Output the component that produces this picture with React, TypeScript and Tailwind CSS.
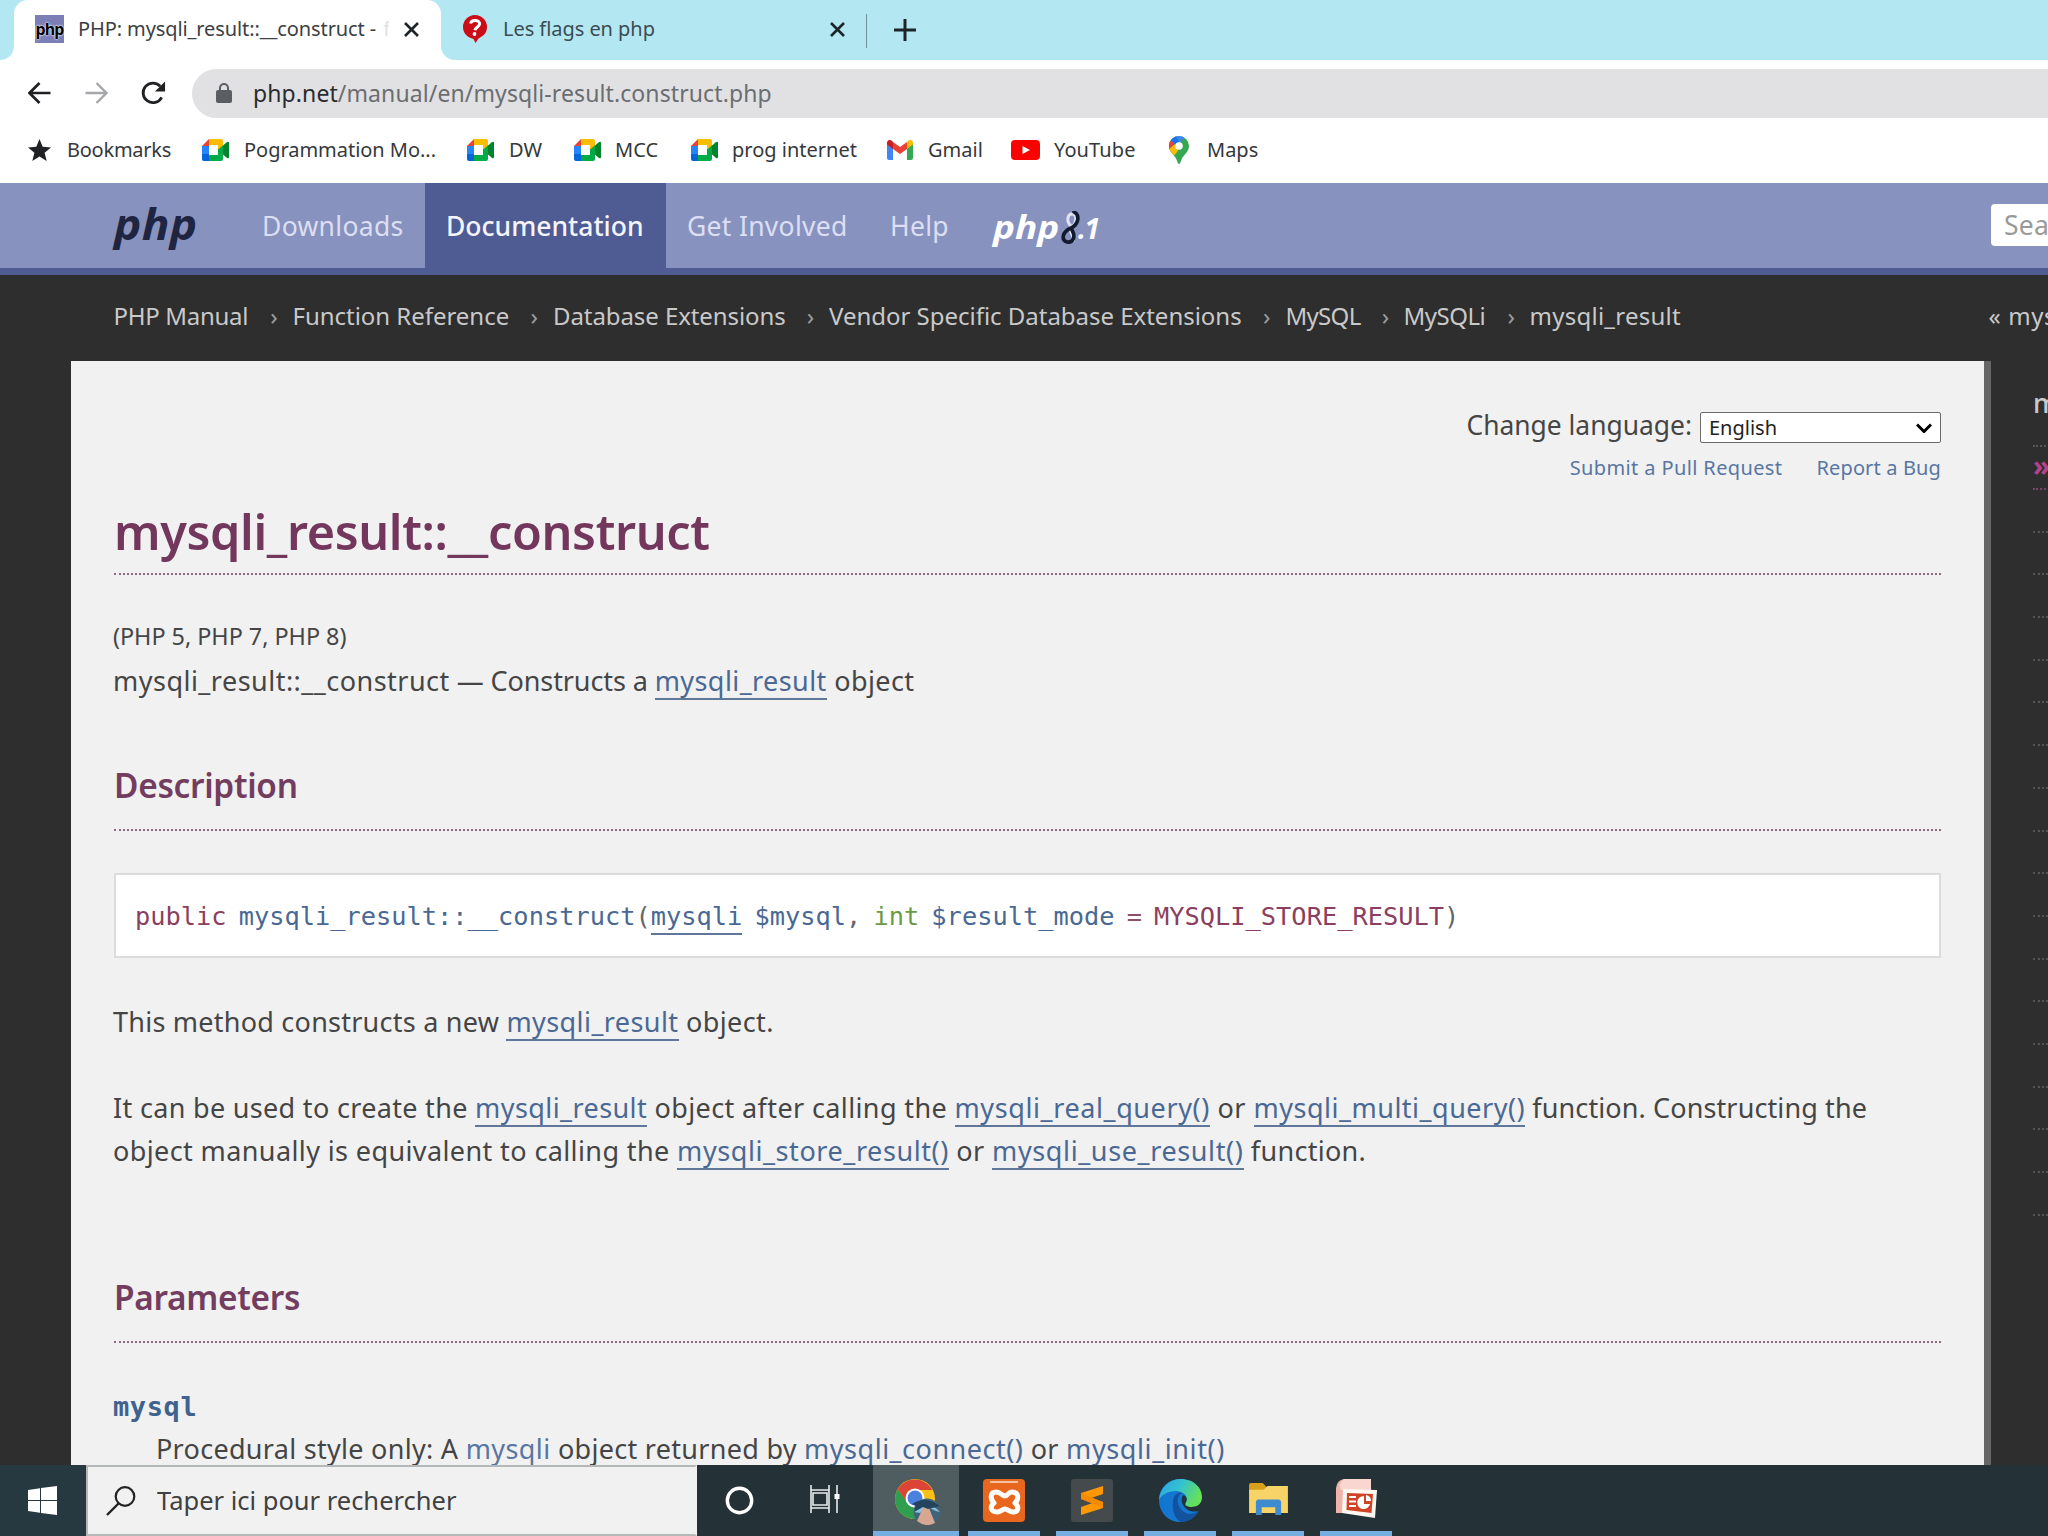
import React from "react";

const MeetIcon = () => (
  <svg className="h-[22px] w-[27px] shrink-0" viewBox="0 0 27 22">
    <path d="M7 0v7H0z" fill="#ea4335" />
    <path d="M7 0h12a2 2 0 0 1 2 2v8l-5 2V6H7z" fill="#fbbc04" />
    <path d="M0 7h7v8H0z" fill="#2684fc" />
    <path d="M0 15h7v7H2a2 2 0 0 1-2-2z" fill="#0066da" />
    <path d="M7 16h9l-1-5 6-2v11a2 2 0 0 1-2 2H7z" fill="#00ac47" />
    <path d="M16 11l9-8q2-1 2 1v14q0 2-2 1z" fill="#00832d" />
    <path d="M16 11l5-4.500v9z" fill="#00ac47" />
    <path d="M7 6h9v10H7z" fill="#fff" />
  </svg>
);

const GmailIcon = () => (
  <svg className="h-[20px] w-[26px] shrink-0" viewBox="0 0 26 20">
    <path d="M0 3v15a2 2 0 0 0 2 2h4V8z" fill="#4285f4" />
    <path d="M26 3v15a2 2 0 0 1-2 2h-4V8z" fill="#34a853" />
    <path d="M20 2v7l6-4.500V3c0-3-3-4-5-2z" fill="#fbbc04" />
    <path d="M6 2v7l7 5 7-5V2l-7 5z" fill="#ea4335" />
    <path d="M6 2v7L0 4.500V3c0-3 3-4 5-2z" fill="#c5221f" />
  </svg>
);

const YouTubeIcon = () => (
  <svg className="h-[20px] w-[29px] shrink-0" viewBox="0 0 29 20">
    <rect width="29" height="20" rx="4" fill="#f00" />
    <path d="M11.500 6v8l7.500-4z" fill="#fff" />
  </svg>
);

const MapsIcon = () => (
  <svg className="h-[28px] w-[20px] shrink-0" viewBox="0 0 20 28">
    <defs>
      <clipPath id="pin">
        <path d="M10 0a10 10 0 0 1 10 10c0 6-5 8-7.500 13.500C11.500 26 11 28 10 28s-1.500-2-2.500-4.500C5 18 0 16 0 10A10 10 0 0 1 10 0z" />
      </clipPath>
    </defs>
    <g clipPath="url(#pin)">
      <rect width="20" height="28" fill="#34a853" />
      <path d="M0 17L20-3H7L0 5z" fill="#4285f4" />
      <path d="M0 0h7l3 6-7 9-3-2z" fill="#1a73e8" />
      <path d="M0 3l5 4-3 7-3-2z" fill="#ea4335" />
      <path d="M0 13l6-5 3 7-6 7-3-3z" fill="#fbbc04" />
    </g>
    <circle cx="10" cy="10" r="3.800" fill="#fff" />
  </svg>
);

const CloseIcon = () => (
  <svg className="h-[15px] w-[15px] shrink-0" viewBox="0 0 15 15">
    <path d="M1 1l13 13M14 1L1 14" stroke="#1d2528" strokeWidth="2.600" />
  </svg>
);

function TabStrip() {
  return (
    <div className="flex h-[60px] bg-[#b3e8f3]">
      <div className="flex w-[14px] bg-white">
        <div className="h-full w-full rounded-br-[14px] bg-[#b3e8f3]" />
      </div>
      <div className="flex w-[427px] items-center rounded-t-[14px] bg-white pb-[2px] pl-[21px]">
        <div className="flex h-[28px] w-[29px] items-center justify-center bg-[#7b7fb5] text-[16px] font-bold leading-none tracking-[-0.8px] text-black [text-shadow:0_0_2px_#fff,0_0_2px_#fff]">
          php
        </div>
        <div className="ml-[14px] flex w-[311px] overflow-hidden whitespace-nowrap text-[20px] tracking-[-0.1px] text-[#3c4043]">
          <span>PHP: mysqli_result::__construct -</span>
          <span className="ml-[7px] opacity-15">f</span>
        </div>
        <div className="ml-[15px]">
          <CloseIcon />
        </div>
      </div>
      <div className="flex w-[425px] bg-white">
        <div className="flex h-full w-full items-center rounded-bl-[14px] bg-[#b3e8f3] pb-[2px] pl-[22px]">
          <svg className="h-[28px] w-[24px] shrink-0" viewBox="0 0 24 28">
            <path d="M12 0a12 12 0 0 1 12 12c0 7-5 9.500-8.500 11.500L12.500 28l-2-4C5 22.500 0 19 0 12A12 12 0 0 1 12 0z" fill="#cb0d17" />
            <path d="M7.500 8.500c1-4.500 10-4 9 .8-.5 2.700-4 2.700-4.500 6" stroke="#fff" strokeWidth="3" fill="none" />
            <circle cx="11.500" cy="19" r="1.900" fill="#fff" />
          </svg>
          <span className="ml-[16px] w-[327px] text-[20px] tracking-[-0.05px] text-[#3b4c52]">Les flags en php</span>
          <CloseIcon />
        </div>
      </div>
      <div className="mt-[14px] h-[34px] w-px bg-[#6f8f97]" />
      <svg className="ml-[27px] mt-[19px] h-[22px] w-[22px]" viewBox="0 0 22 22">
        <path d="M11 0v22M0 11h22" stroke="#1d2528" strokeWidth="3" />
      </svg>
    </div>
  );
}

function Toolbar() {
  return (
    <div className="flex h-[66px] items-center bg-white pl-[28px]">
      <svg className="h-[22px] w-[23px]" viewBox="0 0 23 22">
        <path d="M22.500 11H2M11.500 1L1.500 11l10 10" stroke="#202124" strokeWidth="2.700" fill="none" />
      </svg>
      <svg className="ml-[34px] h-[22px] w-[23px]" viewBox="0 0 23 22">
        <path d="M.5 11H21M11.500 1l10 10-10 10" stroke="#a5a7aa" strokeWidth="2.400" fill="none" />
      </svg>
      <svg className="ml-[33px] h-[24px] w-[25px]" viewBox="0 0 26 24">
        <path d="M21.500 16.500A10.200 10.200 0 1 1 20 5" stroke="#202124" strokeWidth="2.900" fill="none" />
        <path d="M25 0v10.500H14.500z" fill="#202124" />
      </svg>
      <div className="ml-[26px] flex h-[49px] flex-1 items-center rounded-l-full bg-[#e1e1e4] pl-[24px]">
        <svg className="h-[20px] w-[16px]" viewBox="0 0 16 20">
          <rect y="7" width="16" height="13" rx="2" fill="#5a5d62" />
          <path d="M4 8V5a4 4 0 0 1 8 0v3" stroke="#5a5d62" strokeWidth="2" fill="none" />
        </svg>
        <span className="ml-[21px] text-[23px] tracking-[0.1px] text-[#6b6d70]">
          <span className="text-[#2a2b2e]">php.net</span>/manual/en/mysqli-result.construct.php
        </span>
      </div>
    </div>
  );
}

function Bookmark({ icon, label, className, gap }: { icon: React.ReactNode; label: string; className: string; gap: string }) {
  return (
    <div className={`flex shrink-0 items-center whitespace-nowrap ${className}`}>
      {icon}
      <span className={gap}>{label}</span>
    </div>
  );
}

function Bookmarks() {
  return (
    <div className="flex h-[57px] items-center bg-white pb-[10px] pl-[28px] pt-px text-[20px] text-[#35383c]">
      <Bookmark
        icon={
          <svg className="h-[22px] w-[23px]" viewBox="0 0 23 22">
            <path d="M11.500 0l3.200 7.800 8.300.6-6.400 5.400 2.100 8.200-7.200-4.500L4.300 22l2.100-8.200L0 8.400l8.300-.6z" fill="#202124" />
          </svg>
        }
        label="Bookmarks"
        className="w-[174px] tracking-[-0.25px]"
        gap="ml-[16px]"
      />
      <Bookmark icon={<MeetIcon />} label="Pogrammation Mo..." className="w-[265px] tracking-[-0.03px]" gap="ml-[15px]" />
      <Bookmark icon={<MeetIcon />} label="DW" className="w-[107px]" gap="ml-[15px]" />
      <Bookmark icon={<MeetIcon />} label="MCC" className="w-[117px]" gap="ml-[14px]" />
      <Bookmark icon={<MeetIcon />} label="prog internet" className="w-[196px]" gap="ml-[14px]" />
      <Bookmark icon={<GmailIcon />} label="Gmail" className="w-[124px]" gap="ml-[15px]" />
      <Bookmark icon={<YouTubeIcon />} label="YouTube" className="w-[158px] tracking-[0.1px]" gap="ml-[14px]" />
      <Bookmark icon={<MapsIcon />} label="Maps" className="w-[100px]" gap="ml-[18px]" />
    </div>
  );
}

function NavBar() {
  return (
    <div className="flex h-[92px] border-b-[7px] border-[#4f5b93] bg-[#8892bf] text-[26.5px] leading-[86px] tracking-[0.3px] text-[#dcdff3]">
      <div className="ml-[114px] w-[132px] text-[43px] font-bold italic leading-[81px] text-[#1f2540]">
        <span className="inline-block origin-left scale-x-107">php</span>
      </div>
      <div className="w-[179px] pl-[16px]">Downloads</div>
      <div className="h-[86px] w-[241px] bg-[#4f5b93] pl-[21px] font-medium tracking-[0px] text-[#f3f4fc]">Documentation</div>
      <div className="w-[203px] pl-[21px]">Get Involved</div>
      <div className="w-[124px] pl-[21px]">Help</div>
      <div className="flex text-[33px] font-bold italic leading-[88px] text-white">
        <span className="w-[65px] tracking-[0px]">
          <span className="inline-block origin-left scale-x-112">php</span>
        </span>
        <svg className="mt-[28px] h-[34px] w-[24px]" viewBox="0 0 24 34">
          <path d="M14 16C7 10 10 3 14 3c5 0 5 8 0 13s4 10 1 14" stroke="#dfe3f5" strokeWidth="3" fill="none" />
          <path d="M16 1c6 3 5 12-3 16C4 21 3 29 9 31c6 1 9-5 5-12" stroke="#121a2e" strokeWidth="3.600" fill="none" strokeLinecap="round" />
        </svg>
        <span className="-ml-[4px] text-[28px] leading-[90px] tracking-[-1.500px]">.1</span>
      </div>
      <div className="ml-auto flex w-[57px] overflow-hidden pt-[21px]">
        <div className="h-[42px] w-[90px] shrink-0 rounded-[4px] bg-white pl-[13px] leading-[42px] text-[#9a9a9a]">Search</div>
      </div>
    </div>
  );
}

const crumbs: [string, string][] = [
  ["PHP Manual", "w-[179px] tracking-[-0.3px]"],
  ["Function Reference", "w-[260.5px] tracking-[-0.03px]"],
  ["Database Extensions", "w-[276px] tracking-[-0.08px]"],
  ["Vendor Specific Database Extensions", "w-[456.5px] tracking-[-0.02px]"],
  ["MySQL", "w-[118px] tracking-[-0.7px]"],
  ["MySQLi", "w-[126px] tracking-[-0.5px]"],
];

function Breadcrumbs() {
  return (
    <div className="flex h-[86px] whitespace-nowrap pl-[113.5px] text-[24px] leading-[82px] text-[#c9c9c9]">
      {crumbs.map(([label, cls]) => (
        <div key={label} className={`flex shrink-0 justify-between ${cls}`}>
          <span>{label}</span>
          <span className="pr-[15px] text-[#9c9c9c]">›</span>
        </div>
      ))}
      <span className="w-[459px] shrink-0 tracking-[0.25px]">mysqli_result</span>
      <span className="w-[60px] overflow-hidden tracking-[0.6px]">« mysqli</span>
    </div>
  );
}

const L = ({ children, className = "" }: { children: React.ReactNode; className?: string }) => (
  <a className={`relative text-[#4a6894] after:absolute after:inset-x-0 after:bottom-[-0.5px] after:h-[2px] after:bg-[#5f7899] after:content-[''] ${className}`}>{children}</a>
);

function Heading({ children }: { children: React.ReactNode }) {
  return (
    <h2 className="h-[67px] border-b-2 border-dotted border-[#8d6a80] text-[33.4px] font-semibold leading-[43px] tracking-[-0.3px] text-[#733d60]">{children}</h2>
  );
}

function Article() {
  return (
    <div className="w-[1913px] shrink-0 bg-[#f1f1f1] px-[43px] pt-[49px] text-[27px] leading-[43px] text-[#454545]">
      <div className="flex h-[34px] items-center justify-end">
        <span className="-mt-[5px] text-[26.400px] leading-[32px]">Change language:</span>
        <div className="ml-[8px] mt-[1px] flex h-[31px] w-[241px] items-center justify-between rounded-[2px] border-[1.500px] border-[#6b6b6b] bg-white pl-[8px] pr-[8px] text-[20px] leading-[28px] text-[#222]">
          English
          <svg className="h-[10px] w-[16px]" viewBox="0 0 16 10">
            <path d="M1 1.500l7 7 7-7" stroke="#000" strokeWidth="3" fill="none" />
          </svg>
        </div>
      </div>
      <div className="flex h-[48px] justify-end gap-[34px] pt-[3px] text-[20px] leading-[42px] text-[#5876a3]">
        <span className="tracking-[0.38px]">Submit a Pull Request</span>
        <span className="tracking-[0.14px]">Report a Bug</span>
      </div>
      <h1 className="mt-[5px] h-[78px] border-b-2 border-dotted border-[#8d6a80] text-[48.500px] font-semibold leading-[68px] tracking-[-0.35px] text-[#73375d]">
        mysqli_result::__construct
      </h1>
      <p className="-ml-px mt-[40px] text-[23.4px] tracking-[-0.03px]">(PHP 5, PHP 7, PHP 8)</p>
      <p className="-ml-px mt-px whitespace-pre">
        <span className="tracking-[0.48px]">mysqli_result::__construct</span>
        <span className="tracking-[-0.1px]"> — Constructs a </span>
        <L className="tracking-[0.42px]">mysqli_result</L>
        <span className="tracking-[0.4px]"> object</span>
      </p>
      <div className="mt-[62px]">
        <Heading>Description</Heading>
      </div>
      <div className="mt-[42px] h-[85px] whitespace-pre border-2 border-[#dcdcdc] bg-white pl-[19px] font-['DejaVu_Sans_Mono',monospace] text-[25.35px] leading-[82px] [word-spacing:-3.1px] text-[#4a6894]">
        <span className="text-[#8b3f60]">public</span> mysqli_result::__construct<span className="text-[#666]">(</span>
        <a className="relative inline-block leading-[43px] after:absolute after:inset-x-0 after:bottom-[3px] after:h-[2px] after:bg-[#5f7899] after:content-['']">mysqli</a> $mysql<span className="text-[#666]">,</span>{" "}
        <span className="text-[#6b9a45]">int</span> $result_mode <span className="text-[#8b5068]">= </span>
        <span className="text-[#8b3f60]">MYSQLI_STORE_RESULT</span>
        <span className="text-[#666]">)</span>
      </div>
      <p className="-ml-px mt-[42px] whitespace-pre tracking-[0.24px]">
        This method constructs a new <L className="tracking-[0.42px]">mysqli_result</L>
        <span className="tracking-[0.4px]"> object.</span>
      </p>
      <p className="-ml-px mt-[43px] whitespace-pre tracking-[0.32px]">
        It can be used to create the <L className="tracking-[0.42px]">mysqli_result</L>
        <span className="tracking-[0.38px]"> object after calling the </span>
        <L className="tracking-[0.6px]">mysqli_real_query()</L>
        <span className="tracking-[0.5px]"> or </span>
        <L className="tracking-[0.5px]">mysqli_multi_query()</L>
        <span className="tracking-[0.11px]"> function. Constructing the</span>
      </p>
      <p className="-ml-px whitespace-pre tracking-[0.39px]">
        object manually is equivalent to calling the <L className="tracking-[0.58px]">mysqli_store_result()</L> or{" "}
        <L className="tracking-[0.62px]">mysqli_use_result()</L>
        <span className="tracking-[0.3px]"> function.</span>
      </p>
      <div className="mt-[104px]">
        <Heading>Parameters</Heading>
      </div>
      <p className="-ml-px mt-[42px] font-['DejaVu_Sans_Mono',monospace] text-[27px] font-bold tracking-[0.6px] text-[#40628f]">mysql</p>
      <p className="-mt-px ml-[42px] whitespace-pre tracking-[0.29px]">
        Procedural style only: A <span className="tracking-[0.4px] text-[#5876a3]">mysqli</span> object returned by{" "}
        <span className="tracking-[0.5px] text-[#4a6894]">mysqli_connect()</span> or{" "}
        <span className="tracking-[0.6px] text-[#4a6894]">mysqli_init()</span>
      </p>
    </div>
  );
}

function Sidebar() {
  return (
    <div className="ml-[42px] flex-1 overflow-hidden pt-[20px] text-[27px] font-medium leading-[43px] text-[#c9c9c9]">
      <div className="h-[66px] w-[200px] border-b-2 border-dotted border-[#565656]">mysqli_result</div>
      <div className="h-[43px] w-[200px] border-b-2 border-dotted border-[#7a4468] text-[28px] font-bold leading-[36px] text-[#b5428a]">»</div>
      {Array.from({ length: 17 }, (_, i) => (
        <div key={i} className="h-[42.700px] border-b-2 border-dotted border-[#565656]" />
      ))}
    </div>
  );
}

function TaskItem({ children, className = "" }: { children: React.ReactNode; className?: string }) {
  return <div className={`flex h-[71px] shrink-0 justify-center border-b-[5px] border-[#76aee2] pt-[14px] ${className}`}>{children}</div>;
}

function Taskbar() {
  return (
    <div className="flex h-[71px] bg-[#243238]">
      <div className="w-[86px] bg-[#263840] pl-[28px] pt-[21px]">
        <svg className="h-[29px] w-[29px]" viewBox="0 0 29 29">
          <path d="M0 4l12-1.800V14H0zM13 2l16-2v14H13zM0 15h12v11.800L0 25zM13 15h16v14l-16-2z" fill="#fff" />
        </svg>
      </div>
      <div className="flex w-[611px] border-2 border-[#b5b8b9] border-r-[#f1f1f1] bg-[#f1f1f1] pl-[18px]">
        <svg className="mt-[19px] h-[30px] w-[30px]" viewBox="0 0 30 30">
          <circle cx="19" cy="10.500" r="9.300" stroke="#222" strokeWidth="2.200" fill="none" />
          <path d="M12.500 17.500L1 29" stroke="#222" strokeWidth="2.400" />
        </svg>
        <span className="ml-[21px] text-[25.500px] leading-[66px] text-[#404040]">Taper ici pour rechercher</span>
      </div>
      <svg className="ml-[28px] mt-[21px] h-[29px] w-[29px]" viewBox="0 0 29 29">
        <circle cx="14.500" cy="14.500" r="12.200" stroke="#fff" strokeWidth="3.400" fill="none" />
      </svg>
      <svg className="ml-[56px] mt-[20px] h-[28px] w-[30px]" viewBox="0 0 30 28">
        <path d="M1 0v5h18V0M1 28v-5h18v5M3 8h14v12H3zM1 5v18M19 5v18M27 0v28" stroke="#e8eced" strokeWidth="1.600" fill="none" />
        <rect x="24.500" y="9" width="5" height="5" fill="#fff" />
      </svg>
      <TaskItem className="ml-[33px] w-[86px] bg-[#505d60]">
        <svg className="ml-[3px] h-[46px] w-[46px]" viewBox="0 0 46 46">
          <circle cx="20" cy="20" r="20" fill="#fbc116" />
          <path d="M2.700 10A20 20 0 0 0 20 40l6-14-14-3z" fill="#2f9e4f" />
          <path d="M2.700 10A20 20 0 0 1 37.300 11H20L11 22z" fill="#dc4437" />
          <circle cx="20" cy="19" r="9.500" fill="#fff" />
          <circle cx="20" cy="19" r="7.500" fill="#4a80e0" />
          <circle cx="32" cy="33" r="13.500" fill="#40657a" />
          <path d="M19 33q11-15 26 0l-4-1-8-4-8 6z" fill="#8fc1d8" />
          <path d="M22 42l6-13h6l6 15q-9 5-18-2z" fill="#d6a892" />
          <path d="M17 25q14-9 28 2l-12 3-5-2-9 5 2-6z" fill="#24435c" />
        </svg>
      </TaskItem>
      <TaskItem className="ml-[9px] w-[72px]">
        <svg className="h-[43px] w-[42px]" viewBox="0 0 42 43">
          <rect width="42" height="43" rx="4" fill="#e9661f" />
          <path d="M7 3h28" stroke="#f6c3a0" strokeWidth="2" />
          <path
            d="M13 13c-6 0-6 7-2 11-4 3-4 9 3 9 4 0 5-3 8-3s4 3 8 3c6 0 6-6 2-9 4-4 4-11-3-11-4 0-4 4-7 4s-4-4-9-4z"
            fill="#e9661f"
            stroke="#fff"
            strokeWidth="5"
            strokeLinejoin="round"
          />
          <path d="M14 18l4 5.500-4 4.500M28 18l-4 5.500 4 4.500M18 23.500h6" stroke="#e9661f" strokeWidth="3" fill="none" />
        </svg>
      </TaskItem>
      <TaskItem className="ml-[16px] w-[72px]">
        <svg className="h-[43px] w-[42px]" viewBox="0 0 42 43">
          <rect width="42" height="43" rx="3" fill="#454a4d" />
          <path d="M10 14l22-7v8l-13 4.500L32 23v6l-22 7v-8l13-4.500L10 20z" fill="#ff9800" />
          <path d="M10 14v6l22 9v-6z" fill="#f58a00" />
        </svg>
      </TaskItem>
      <TaskItem className="ml-[16px] w-[72px]">
        <svg className="h-[43px] w-[43px]" viewBox="0 0 43 43">
          <defs>
            <linearGradient id="edgeTop" x1="0" x2="1" y1="0" y2=".4">
              <stop offset="0" stopColor="#2f9fe0" />
              <stop offset=".5" stopColor="#32c1d2" />
              <stop offset="1" stopColor="#64e05c" />
            </linearGradient>
          </defs>
          <path d="M0 21C0 9 10 0 21 0s20 12 10 22l-5 6c4 4 10 4 14 2-3 8-10 13-19 13C9 43 0 33 0 21z" fill="#1376cf" />
          <path d="M0 21C1 8 10 0 22 0c13 0 21 9 21 18 0 7-5 10-10 10-6 0-8-2-6-5 3-6-3-11-10-11C9 12 2 16 0 21z" fill="url(#edgeTop)" />
          <path d="M14 23c0-7 5-10 9-9-8 4-4 20 8 21 4 0 7-2 9-3-4 7-11 11-18 11-6-3-9-11-8-20z" fill="#12529f" />
          <path d="M24 16c3 1 5 4 3 7-2 3 0 5 6 5 4 0 7-1 9-4l1 2c-1 3-2 4-4 6-9 3-20-6-15-16z" fill="#243238" />
        </svg>
      </TaskItem>
      <TaskItem className="ml-[16px] w-[72px]">
        <svg className="mt-[4px] h-[33px] w-[39px]" viewBox="0 0 40 34">
          <path d="M0 2q0-2 2-2h12l4 4v6H0z" fill="#d9a01c" />
          <path d="M0 7h15l4-4h21v28H0z" fill="#f8d468" />
          <path d="M7 33V20q0-3 3-3h20q3 0 3 3v13h-6v-8H13v8z" fill="#3f8bd0" />
        </svg>
      </TaskItem>
      <TaskItem className="ml-[16px] w-[72px]">
        <svg className="h-[40px] w-[41px]" viewBox="0 0 41 40">
          <path d="M8 0h27v12L12 34H0V9q1-8 8-9z" fill="#f0b3aa" />
          <path d="M8 0h27v11H5q-4-5 3-11z" fill="#f9d7d0" />
          <path d="M7 10l34 1-2 28-33-5z" fill="#fff7f2" />
          <path d="M11 14l26 1-1.500 19-25-3z" fill="#cf4426" />
          <path d="M13 18h7M13 22.500h7M13 27h7" stroke="#fff" strokeWidth="2" />
          <path d="M28 17a6.500 6.500 0 1 0 6 8h-6z" fill="#fff" />
          <path d="M30 16v6h5q0-5-5-6z" fill="#fff" />
        </svg>
      </TaskItem>
    </div>
  );
}

export default function App() {
  return (
    <div className="flex h-[1536px] w-[2048px] flex-col overflow-hidden bg-[#2e2e2e] font-['Noto_Sans',sans-serif]">
      <TabStrip />
      <Toolbar />
      <Bookmarks />
      <NavBar />
      <Breadcrumbs />
      <div className="flex h-[1104px] overflow-hidden pl-[71px]">
        <Article />
        <div className="w-[7px] shrink-0 bg-[#666]" />
        <Sidebar />
      </div>
      <Taskbar />
    </div>
  );
}
